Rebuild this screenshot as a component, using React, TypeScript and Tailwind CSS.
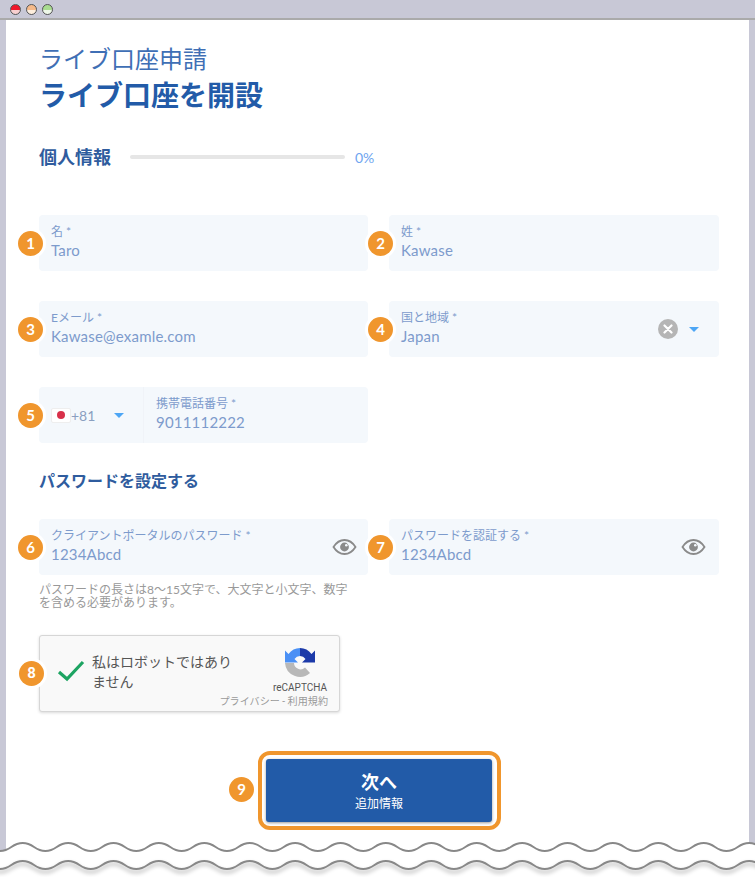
import React from "react";

const WAVE_PERIOD = 45.4;

function wavePath(troughY: number, crestY: number) {
  let d = `M${-WAVE_PERIOD} ${troughY}`;
  for (let x = -WAVE_PERIOD; x < 780; x += WAVE_PERIOD) {
    const q = WAVE_PERIOD / 4;
    const mid = x + WAVE_PERIOD / 2;
    d += ` C${x + q} ${troughY} ${mid - q} ${crestY} ${mid} ${crestY}`;
    d += ` C${mid + q} ${crestY} ${x + WAVE_PERIOD - q} ${troughY} ${x + WAVE_PERIOD} ${troughY}`;
  }
  return d;
}

function Badge({ n, className }: { n: number; className: string }) {
  return (
    <span
      className={`absolute flex h-[25px] w-[25px] items-center justify-center rounded-full bg-[#f0962d] text-[15px] font-bold text-white ring-[3px] ring-white ${className}`}
    >
      {n}
    </span>
  );
}

function Eye() {
  return (
    <svg width="25" height="18" viewBox="0 0 25 18" className="shrink-0">
      <path d="M1.5 9C4.5 4.2 8.2 2 12.5 2s8 2.2 11 7c-3 4.8-6.7 7-11 7s-8-2.2-11-7Z" fill="none" stroke="#8a8a8a" strokeWidth="1.8" />
      <circle cx="12.5" cy="9" r="4.4" fill="#8a8a8a" />
      <circle cx="14.3" cy="7.2" r="1.3" fill="#f4f8fc" />
    </svg>
  );
}

function Caret() {
  return (
    <svg width="10" height="5" viewBox="0 0 10 5" className="shrink-0">
      <path d="M0 0h10L5 5Z" fill="#4da6f5" />
    </svg>
  );
}

function Field({
  label,
  value,
  badge,
  children,
}: {
  label: string;
  value: string;
  badge: number;
  children?: React.ReactNode;
}) {
  return (
    <div className="relative flex h-[56px] items-center rounded-[4px] bg-[#f4f8fc] pl-3 pr-[13px]">
      <Badge n={badge} className="left-[-21px] top-[15.5px]" />
      <div className="min-w-0 flex-1 pb-[2px]">
        <div className="text-[12px] leading-[16px] text-[#7d9bcc]">{label}</div>
        <div className="text-[15px] leading-[20px] tracking-[0.2px] text-[#7d9bcc]">{value}</div>
      </div>
      {children}
    </div>
  );
}

export default function App() {
  return (
    <div className="relative h-[877px] w-[755px] overflow-hidden bg-white font-['Lato','Noto_Sans_CJK_JP',sans-serif]">
      <div className="flex h-[20px] items-center gap-[5px] border-b-2 border-[#aaaaaa] bg-[#c8c8d6] pl-[10px]">
        <span className="h-[11px] w-[11px] rounded-full border border-[#555] bg-[linear-gradient(#f0162a_55%,#f8d0d0_55%)]" />
        <span className="h-[11px] w-[11px] rounded-full border border-[#555] bg-[linear-gradient(#f5b98a_55%,#fdeedd_55%)]" />
        <span className="h-[11px] w-[11px] rounded-full border border-[#555] bg-[linear-gradient(#a9dc90_55%,#eef8e8_55%)]" />
      </div>

      <div className="flex h-[857px]">
        <div className="w-[6px] bg-[#c8c8d6]" />
        <main className="flex-1 pl-[33px] pt-[23px]">
          <h2 className="text-[24px] leading-[32px] text-[#3f6fb5]">ライブ口座申請</h2>
          <h1 className="text-[28px] font-bold leading-[40px] text-[#225ba8]">ライブ口座を開設</h1>

          <div className="mt-[30px] flex h-[24px] items-center">
            <h3 className="w-[91px] text-[18px] font-bold text-[#2f5c9e]">個人情報</h3>
            <div className="h-[4px] w-[215px] rounded-full bg-[#e6e6e6]" />
            <span className="ml-[10px] pt-[1px] text-[14px] text-[#6ea5f0]">0%</span>
          </div>

          <div className="mt-[46px] grid w-[680px] grid-cols-[329px_330px] gap-x-[21px] gap-y-[30px]">
            <Field label="名 *" value="Taro" badge={1} />
            <Field label="姓 *" value="Kawase" badge={2} />
            <Field label="Eメール *" value="Kawase@examle.com" badge={3} />
            <Field label="国と地域 *" value="Japan" badge={4}>
              <span className="mr-[11px] flex h-[20px] w-[20px] items-center justify-center rounded-full bg-[#b5b5b5]">
                <svg width="10" height="10" viewBox="0 0 10 10">
                  <path d="M1.5 1.5l7 7M8.5 1.5l-7 7" stroke="#fff" strokeWidth="2.2" strokeLinecap="round" />
                </svg>
              </span>
              <span className="mr-[7px] flex">
                <Caret />
              </span>
            </Field>

            <div className="relative flex h-[56px] rounded-[4px] bg-[#f4f8fc]">
              <Badge n={5} className="left-[-21px] top-[15.5px]" />
              <div className="flex w-[105px] items-center border-r border-[#f0f3f8] pl-3">
                <span className="flex h-[15px] w-[20px] items-center justify-center rounded-[2px] border border-[#eeeeee] bg-white">
                  <span className="h-[8px] w-[8px] rounded-full bg-[#d8304a]" />
                </span>
                <span className="text-[14px] text-[#8a9fc0]">+81</span>
                <span className="ml-[19px] flex">
                  <Caret />
                </span>
              </div>
              <div className="pl-3 pt-[9px]">
                <div className="text-[12px] leading-[16px] text-[#7d9bcc]">携帯電話番号 *</div>
                <div className="text-[15px] leading-[20px] tracking-[0.2px] text-[#7d9bcc]">9011112222</div>
              </div>
            </div>
            <div />
          </div>

          <h3 className="mt-[26px] text-[16px] font-bold leading-[24px] text-[#2f5c9e]">パスワードを設定する</h3>

          <div className="mt-[26px] grid w-[680px] grid-cols-[329px_330px] gap-x-[21px]">
            <Field label="クライアントポータルのパスワード *" value="1234Abcd" badge={6}>
              <span className="mr-[-2px]">
                <Eye />
              </span>
            </Field>
            <Field label="パスワードを認証する *" value="1234Abcd" badge={7}>
              <Eye />
            </Field>
          </div>

          <p className="mt-[8px] w-[320px] text-[12px] leading-[13px] text-[#999999]">
            パスワードの長さは8〜15文字で、大文字と小文字、数字を含める必要があります。
          </p>

          <div className="relative mt-[26px] flex h-[77px] w-[301px] rounded-[3px] border border-[#d6d6d6] bg-[#f9f9f9] shadow-[0_1px_3px_rgba(0,0,0,0.15)] font-['Roboto','Noto_Sans_CJK_JP',sans-serif]">
            <Badge n={8} className="left-[-21px] top-[25px]" />
            <svg width="28" height="22" viewBox="0 0 28 22" className="ml-[17px] mt-[24px] shrink-0">
              <path d="M2 12l8 7L26 2" fill="none" stroke="#1da462" strokeWidth="3.2" />
            </svg>
            <div className="ml-[7px] mt-[16px] w-[150px] text-[14px] leading-[20px] text-[#555555]">
              私はロボットではありません
            </div>
            <div className="absolute right-[11px] top-[11px] flex flex-col items-end">
              <svg width="32" height="32" viewBox="0 0 32 32" className="mr-[12px]">
                <path d="M1 16H10A6.500 6.500 0 0 0 21 20.500L26 26A15 15 0 0 1 1 16Z" fill="#b8b8b8" />
                <path d="M16 1V9A7 7 0 0 0 10.500 12L14 15.500H1V3.500L4.500 7A15 15 0 0 1 16 1Z" fill="#4a90f5" />
                <path d="M16 1A15 15 0 0 1 27.500 7L31 3.500V15.500H18L21.500 12A7 7 0 0 0 16 9Z" fill="#1c3aa9" />
              </svg>
              <span className="mt-[2px] mr-[1px] text-[10px] leading-[14px] text-[#555555]">reCAPTCHA</span>
              <span className="text-[10.1px] leading-[14px] text-[#999999]">プライバシー - 利用規約</span>
            </div>
          </div>

          <div className="relative ml-[219px] mt-[39px] flex h-[79px] w-[243px] rounded-[12px] border-4 border-[#f0962d] py-[4px] pl-[4px] pr-[5px]">
            <Badge n={9} className="left-[-33px] top-[22px]" />
            <button className="flex flex-1 flex-col items-center justify-center rounded-[3px] bg-[#225ba8] text-white shadow-[0_1px_3px_rgba(0,0,0,0.4)]">
              <span className="text-[18px] font-bold leading-[24px]">次へ</span>
              <span className="mt-[2px] text-[12px] leading-[16px]">追加情報</span>
            </button>
          </div>
        </main>
        <div className="w-[6px] bg-[#c8c8d6]" />
      </div>

      <svg width="755" height="877" viewBox="0 0 755 877" className="pointer-events-none absolute left-0 top-0">
        <path d={`${wavePath(851, 843)} V877 H${-WAVE_PERIOD} Z`} fill="#ffffff" />
        <path d={wavePath(851, 843)} fill="none" stroke="#888888" strokeWidth="2" />
        <path
          d={wavePath(869, 861)}
          fill="none"
          stroke="#888888"
          strokeWidth="2"
          className="drop-shadow-[0_3px_2px_rgba(0,0,0,0.35)]"
        />
      </svg>
    </div>
  );
}
